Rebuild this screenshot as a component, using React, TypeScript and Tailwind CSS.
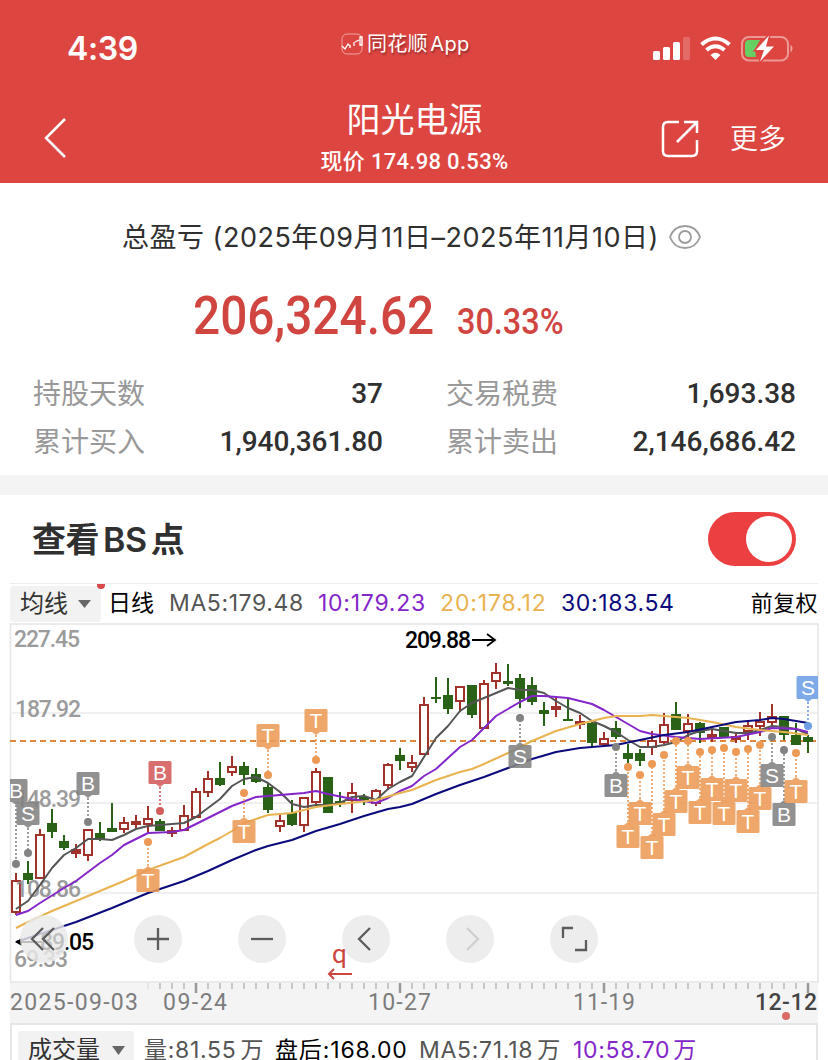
import React from 'react'

const FONT = "font-['Inter','Noto_Sans_CJK_SC',sans-serif]"
const DIN = "font-['Roboto','Noto_Sans_CJK_SC',sans-serif]"

const TOP = 623

// kind, high, top, bottom, low
type Candle = ['r' | 'g', number, number, number, number]

const candles: Candle[] = [
  ['r', 873, 881, 912, 915], ['g', 861, 873, 880, 884], ['r', 829, 835, 878, 878], ['g', 809, 823, 832, 838],
  ['g', 835, 841, 848, 850], ['r', 844, 850, 853, 858], ['r', 829, 830, 855, 861], ['g', 822, 833, 839, 841],
  ['g', 803, 828, 832, 832], ['r', 817, 823, 829, 833], ['r', 815, 822, 822, 828], ['r', 806, 819, 824, 833],
  ['g', 819, 821, 831, 831], ['r', 827, 831, 833, 837], ['r', 805, 816, 830, 831], ['r', 788, 792, 817, 817],
  ['r', 771, 779, 792, 797], ['g', 762, 778, 785, 786], ['r', 756, 767, 772, 776], ['g', 762, 766, 775, 785],
  ['g', 768, 774, 782, 783], ['g', 783, 787, 810, 813], ['r', 815, 821, 826, 832], ['g', 800, 813, 825, 826],
  ['r', 797, 798, 825, 832], ['r', 768, 772, 802, 804], ['g', 777, 777, 813, 813], ['g', 792, 801, 803, 807],
  ['r', 783, 793, 800, 813], ['g', 794, 797, 800, 805], ['r', 789, 791, 803, 806], ['r', 763, 765, 785, 790],
  ['g', 748, 755, 761, 770], ['r', 755, 763, 767, 772], ['r', 697, 705, 754, 754], ['g', 677, 697, 698, 703],
  ['g', 678, 695, 709, 714], ['r', 686, 687, 701, 712], ['g', 685, 685, 715, 718], ['r', 680, 684, 728, 728],
  ['r', 663, 673, 681, 689], ['g', 664, 681, 684, 686], ['g', 674, 678, 699, 708], ['g', 677, 685, 702, 705],
  ['g', 702, 710, 714, 726], ['r', 698, 707, 708, 717], ['g', 698, 719, 720, 721], ['r', 715, 722, 724, 729],
  ['g', 721, 723, 743, 747], ['r', 732, 739, 744, 745], ['g', 721, 728, 737, 739], ['g', 744, 753, 759, 763],
  ['g', 749, 753, 761, 766], ['r', 731, 741, 747, 755], ['r', 713, 725, 742, 744], ['g', 702, 714, 730, 730],
  ['r', 714, 724, 731, 738], ['g', 722, 723, 733, 743], ['r', 730, 735, 736, 742], ['g', 727, 727, 737, 738],
  ['r', 734, 737, 739, 743], ['r', 721, 726, 731, 740], ['r', 712, 722, 726, 736], ['r', 704, 717, 722, 727],
  ['g', 716, 716, 735, 740], ['g', 723, 735, 745, 745], ['g', 735, 737, 742, 753],
]

const averages = [
  {
    color: '#555555',
    points:
      '16,909 28,901 40,885 52,868 64,855 76,848 88,839 100,839 112,840 124,835 136,829 148,826 160,825 172,824 184,823 196,817 208,808 220,799 232,786 244,779 256,777 268,783 280,792 292,804 304,807 316,805 328,805 340,803 352,797 364,796 376,800 388,789 400,782 412,776 424,757 436,738 448,726 460,711 472,703 484,698 496,693 508,688 520,690 532,690 544,693 556,701 568,708 580,713 592,721 604,726 616,732 628,740 640,747 652,747 664,745 676,742 688,735 700,731 712,729 724,731 736,733 748,733 760,730 772,726 784,727 796,729 808,734',
  },
  {
    color: '#8426c9',
    points:
      '16,915 28,911 40,903 64,888 76,881 100,863 112,855 124,845 148,833 172,832 184,830 196,824 208,818 220,812 232,806 256,797 280,795 304,793 316,791 328,794 352,799 364,801 376,803 388,798 400,791 412,786 424,776 436,769 460,747 472,740 496,716 508,709 520,702 532,696 544,696 568,698 592,704 604,710 616,717 628,724 640,731 652,734 676,737 700,739 736,737 760,732 772,728 796,729 808,732',
  },
  {
    color: '#e8b350',
    points:
      '16,928 28,922 52,911 76,901 100,891 124,881 148,870 184,857 208,844 220,838 232,831 244,823 268,815 292,813 316,807 340,804 376,800 400,793 412,790 436,780 460,772 472,769 484,764 508,753 532,741 556,731 580,724 604,718 616,716 640,716 652,715 688,718 712,722 736,727 760,730 784,732 808,735',
  },
  {
    color: '#0a0a7c',
    points:
      '16,942 28,938 64,926 76,922 112,908 136,898 148,893 184,881 208,871 232,860 256,850 268,846 292,840 316,831 340,824 364,816 388,809 400,807 412,804 436,794 460,785 484,777 508,768 532,759 556,752 580,748 604,746 616,745 640,740 664,735 688,732 712,727 736,722 760,720 772,718 784,719 808,723',
  },
]

const GRAY = '#828282'
const ORANGE = '#ec9a56'

// letter, x, dot y, box top, colour
type Marker = [string, number, number, number, string]

const markers: Marker[] = [
  ['B', 16, 864, 779, GRAY], ['S', 28, 853, 802, GRAY], ['B', 88, 822, 772, GRAY], ['B', 160, 811, 761, '#d45b5b'],
  ['T', 148, 842, 869, ORANGE], ['T', 244, 793, 820, ORANGE], ['T', 268, 775, 724, ORANGE], ['T', 316, 760, 709, ORANGE],
  ['S', 520, 718, 745, GRAY], ['B', 616, 747, 774, GRAY], ['T', 628, 767, 825, ORANGE], ['T', 640, 775, 802, ORANGE],
  ['T', 652, 764, 836, ORANGE], ['T', 664, 755, 813, ORANGE], ['T', 676, 741, 790, ORANGE], ['T', 688, 741, 766, ORANGE],
  ['T', 700, 752, 801, ORANGE], ['T', 712, 750, 778, ORANGE], ['T', 724, 748, 802, ORANGE], ['T', 736, 752, 779, ORANGE],
  ['T', 748, 749, 810, ORANGE], ['T', 760, 745, 787, ORANGE], ['S', 772, 737, 764, GRAY], ['B', 784, 750, 803, GRAY],
  ['T', 796, 753, 780, ORANGE], ['S', 808, 726, 676, '#6e9fe6'],
]

const CandleShape = ({ data, x }: { data: Candle; x: number }) => {
  const [kind, high, top, bottom, low] = data
  const color = kind === 'r' ? '#a0322b' : '#2a6318'
  const h = Math.max(bottom - top, 2)
  return (
    <g stroke={color} strokeWidth="2">
      <line x1={x} x2={x} y1={high} y2={top} />
      <line x1={x} x2={x} y1={top + h} y2={low} />
      {kind === 'r' ? (
        <rect x={x - 4} y={top} width="8" height={h} fill={h < 4 ? color : '#fff'} />
      ) : (
        <rect x={x - 5} y={top} width="10" height={h} fill={color} stroke="none" />
      )}
    </g>
  )
}

const MarkerShape = ({ data }: { data: Marker }) => {
  const [letter, x, dot, top, color] = data
  const above = top < dot
  const edge = above ? top + 23 : top
  const tip = above ? edge + 3 : edge - 3
  return (
    <g>
      <line x1={x} x2={x} y1={tip} y2={dot} stroke={color} strokeWidth="1.6" strokeDasharray="2 2" />
      <circle cx={x} cy={dot} r="4" fill={color} />
      <g opacity="0.88">
        <rect x={x - 11.5} y={top} width="23" height="23" rx="1.5" fill={color} />
        <path d={`M${x - 4} ${edge}L${x} ${tip}L${x + 4} ${edge}Z`} fill={color} />
      </g>
      <text x={x} y={top + 19} textAnchor="middle" fontSize="21" fill="#fff" className="font-['Liberation_Sans',sans-serif]">
        {letter}
      </text>
    </g>
  )
}

const StatusBar = () => (
  <div className="flex h-[92px] items-center px-[67px] pt-[4px]">
    <div className="w-[271px] pt-[2px] text-[32px] leading-none font-semibold tracking-[-0.4px]">4:39</div>
    <div className="-mt-[9px] flex flex-1 items-center gap-[4px] pl-[3px] text-[20px] [text-shadow:1px_2px_2px_rgba(0,0,0,0.35)]">
      <svg width="22" height="22" viewBox="0 0 22 22" fill="none" stroke="#fff">
        <rect x="1" y="1" width="20" height="20" rx="5" opacity="0.5" />
        <path d="M1 13l3 3 3-5 2 2M9 12v3M13 9v4M14 9l4-2M19 4v8h2V4z" strokeWidth="1.3" />
      </svg>
      <span className="leading-none tracking-[0.3px] [word-spacing:-3.5px]">同花顺 App</span>
    </div>
    <svg className="mt-[1px] -mr-[33px] shrink-0" width="142" height="28" viewBox="652 35 142 28" fill="#fff">
      <rect x="653" y="51" width="7" height="9" rx="1.5" />
      <rect x="663" y="47" width="7" height="13" rx="1.5" />
      <rect x="673" y="42" width="7" height="18" rx="1.5" />
      <rect x="683" y="37" width="7" height="23" rx="1.5" opacity="0.2" />
      <g fill="none" stroke="#fff" strokeWidth="4">
        <path d="M701.500 44.500Q715.500 32.500 729.500 44.500" />
        <path d="M706.500 50Q715.500 42.500 724.500 50" />
      </g>
      <path d="M710.500 55Q715.500 50.500 720.500 55L715.500 60Z" />
      <rect x="742" y="37" width="46" height="23.500" rx="7" fill="none" stroke="#fff" strokeWidth="2" opacity="0.45" />
      <path d="M790.500 44.500q4 4 0 8z" opacity="0.5" />
      <path d="M749 40h11l-5 9 1 8h-7q-4 0-4-4v-9q0-4 4-4z" fill="#65cf64" />
      <path d="M769 35.500l-13 14.500h8l-4 11.500 14-15h-8z" stroke="#dd4541" strokeWidth="3" paintOrder="stroke" />
    </svg>
  </div>
)

const Header = () => (
  <header className="h-[183px] bg-[#dd4541] text-white">
    <StatusBar />
    <div className="flex h-[91px] items-center justify-between pr-[42px] pl-[43px]">
      <svg width="275" height="42" viewBox="0 0 275 42" fill="none" stroke="#fff" strokeWidth="2.5">
        <path d="M22 2L3 21l19 19" />
      </svg>
      <div className="-mt-[2px] flex w-[192px] flex-col items-center whitespace-nowrap">
        <h1 className="text-[34px] leading-[44px] font-normal">阳光电源</h1>
        <p className={`${DIN} mt-[7px] text-[22px] leading-[26px] font-medium tracking-[0.3px]`}>
          现价 174.98 0.53%
        </p>
      </div>
      <div className="flex w-[275px] items-center justify-end gap-[31px] pt-[2px]">
        <svg width="38" height="38" viewBox="0 0 38 38" fill="none" stroke="#fff" strokeWidth="2.500">
          <path d="M18 2H7Q2 2 2 7v24q0 5 5 5h24q5 0 5-5V20M23 2h13v11M36 2L16 22" />
        </svg>
        <span className="text-[28px] font-[350]">更多</span>
      </div>
    </div>
  </header>
)

const Stat = ({ label, value }: { label: string; value: string }) => (
  <div className="flex h-[48px] items-center justify-between">
    <span className="text-[28px] text-[#999]">{label}</span>
    <span className={`${DIN} -mr-[1px] text-[28px] font-medium text-[#303030]`}>{value}</span>
  </div>
)

const Summary = () => (
  <section className="h-[292px] px-[33px]">
    <div className="flex h-[109px] items-center gap-[9px] pl-[89px] text-[27px] whitespace-nowrap text-[#303030]">
      <span className="pt-[1px] tracking-[0.5px]">总盈亏 (2025年09月11日–2025年11月10日)</span>
      <svg className="-mt-[1px]" width="34" height="26" viewBox="0 0 34 26" fill="none" stroke="#9c9c9c" strokeWidth="1.8">
        <path d="M2 13C5 5 10 2 17 2s12 3 15 11c-3 8-8 11-15 11S5 21 2 13Z" />
        <circle cx="17" cy="13" r="6" />
      </svg>
    </div>
    <div className={`${DIN} -mt-[3px] flex h-[69px] items-baseline pl-[160px] leading-none font-medium text-[#d0453f]`}>
      <span className="w-[264px] origin-left scale-x-[0.885] text-[54px]">206,324.62</span>
      <span className="origin-left scale-x-[0.9] text-[36px]">30.33%</span>
    </div>
    <div className="grid grid-cols-2 gap-x-[64px] pt-[12px]">
      <Stat label="持股天数" value="37" />
      <Stat label="交易税费" value="1,693.38" />
      <Stat label="累计买入" value="1,940,361.80" />
      <Stat label="累计卖出" value="2,146,686.42" />
    </div>
  </section>
)

const Legend = () => (
  <div className="mx-[10px] flex h-[40px] items-center border-t border-[#ececec] text-[23px] whitespace-nowrap">
    <div className="relative flex h-[36px] w-[91px] items-center gap-[10px] rounded bg-[#f2f2f2] pl-[10px] text-[24px] text-[#333]">
      均线
      <svg width="13" height="8" viewBox="0 0 14 10" preserveAspectRatio="none">
        <path d="M0 0h14L7 10z" fill="#666" />
      </svg>
      <i className="absolute -top-[2px] right-[-4px] h-[5px] w-[8px] rounded-b-full bg-[#d94848]" />
    </div>
    <span className="ml-[7px] w-[61px] text-[23px] text-black">日线</span>
    <span className="w-[149px] tracking-[0.6px] text-[#555]">MA5:179.48</span>
    <span className="w-[122px] tracking-[0.75px] text-[#8426c9]">10:179.23</span>
    <span className="w-[121px] tracking-[0.85px] text-[#e8b350]">20:178.12</span>
    <span className="tracking-[0.65px] text-[#0a0a7c]">30:183.54</span>
    <span className="ml-auto text-[22px] tracking-[0.4px] text-black">前复权</span>
  </div>
)

const Buttons = () => (
  <g fill="none" stroke="#5c5c5c" strokeWidth="2.300">
    {[44, 158, 262, 366, 470, 574].map((x) => (
      <circle key={x} cx={x} cy="939" r="24" fill="#e9e9e9" fillOpacity="0.82" stroke="none" />
    ))}
    <path d="M43 928L32 939l11 11M54 928L43 939l11 11" />
    <path d="M147 939h22M158 928v22" />
    <path d="M251 939h22" />
    <path d="M370 928L359 939l11 11" />
    <path d="M467 928l11 11-11 11" stroke="#cfcfcf" />
    <path d="M563 938V928h10M586 940v10h-11" />
  </g>
)

const Chart = () => (
  <svg className={`${DIN} block`} width="828" height="360" viewBox={`0 ${TOP} 828 360`}>
    <clipPath id="plot">
      <rect x="10" y={TOP} width="808" height="360" />
    </clipPath>
    <g stroke="#ececec" strokeWidth="1.500">
      <rect x="10.500" y="624" width="807.500" height="358" fill="none" strokeWidth="1.600" stroke="#e6e6e6" />
      <path d="M10 713h808M10 803h808M10 893h808" />
    </g>
    <line x1="10" x2="817" y1="741" y2="741" stroke="#e0873f" strokeWidth="1.800" strokeDasharray="6 4" />
    {candles.map((c, i) => (
      <CandleShape key={i} data={c} x={16 + i * 12} />
    ))}
    <g fontSize="23" fontWeight="500" fill="#8e8e8e" fillOpacity="0.9">
      <text x="14" y="647" textLength="66">227.45</text>
      <text x="15" y="717" textLength="66">187.92</text>
      <text x="15" y="807" textLength="66">148.39</text>
      <text x="15" y="897" textLength="66">108.86</text>
      <text x="14" y="967" textLength="54">69.33</text>
    </g>
    {averages.map((a) => (
      <polyline key={a.color} points={a.points} fill="none" stroke={a.color} strokeWidth="2" strokeLinejoin="round" />
    ))}
    <g clipPath="url(#plot)">
      {markers.map((m, i) => (
        <MarkerShape key={i} data={m} />
      ))}
    </g>
    <g fontSize="23" fontWeight="500">
      <text x="405" y="648" textLength="66">209.88</text>
      <text x="40" y="950" textLength="54">89.05</text>
    </g>
    <path d="M472 640h22M487 634l8 6-8 6M42 942H18" fill="none" stroke="#000" strokeWidth="1.800" />
    <path d="M15 942l7-4v8z" />
    <Buttons />
    <text x="332" y="963" fontSize="26" fill="#cb4640">q</text>
    <path d="M352 974h-23M334 969l-5 5 5 5" fill="none" stroke="#cb4640" strokeWidth="2" />
  </svg>
)

const ticks = Array.from({ length: 56 }, (_, i) => 148 + i * 12)

const DateAxis = () => (
  <svg className={`${DIN} mx-[10px] block bg-[#f4f4f4]`} width="808" height="40" viewBox="10 983 808 40">
    {ticks.map((x) => {
      const major = (x - 196) % 204 === 0
      return (
        <line
          key={x}
          x1={x}
          x2={x}
          y1="983"
          y2={major ? 993 : 989}
          stroke="#999"
          strokeWidth={major ? 2.5 : 1}
          opacity={x === 148 ? 0.3 : 1}
        />
      )
    })}
    <g fontSize="23" fill="#7c7c7c">
      <text x="10" y="1010" textLength="128">2025-09-03</text>
      <text x="163" y="1010" textLength="64">09-24</text>
      <text x="368" y="1010" textLength="63">10-27</text>
      <text x="573" y="1010" textLength="62">11-19</text>
      <text x="755" y="1010" textLength="62" fill="#444" fontWeight="500">12-12</text>
    </g>
    <circle cx="786" cy="1016" r="4" fill="#d96a68" />
  </svg>
)

const Volume = () => (
  <div className="mx-[10px] flex h-[37px] items-end overflow-hidden border-x-2 border-t-2 border-[#e6e6e6] text-[23px] whitespace-nowrap">
    <div className="ml-[6px] flex h-[29px] w-[116px] shrink-0 items-center gap-[12px] rounded-t bg-[#f2f2f2] pt-[9px] pl-[10px] text-[24px] text-[#333]">
      成交量
      <svg width="13" height="9" viewBox="0 0 12 10" preserveAspectRatio="none">
        <path d="M0 0h12L6 10z" fill="#666" />
      </svg>
    </div>
    <div className="-mb-[7px] ml-[10px] flex leading-[34px] tracking-[0.7px]">
      <span className="w-[131px] text-[#555]">量:81.55<span className="ml-[4px]">万</span></span>
      <span className="w-[144px] tracking-[0.85px] text-black">盘后:168.00</span>
      <span className="w-[154px] text-[#555]">MA5:71.18<span className="ml-[4px]">万</span></span>
      <span className="text-[#8426c9]">10:58.70<span className="ml-[3px]">万</span></span>
    </div>
  </div>
)

const App = () => {
  return (
    <div className={`${FONT} h-[1060px] w-[828px] overflow-hidden bg-white`}>
      <Header />
      <Summary />
      <div className="h-[20px] bg-[#f4f4f4]"></div>
      <div className="flex h-[88px] items-center justify-between px-[32px]">
        <h2 className="text-[34px] font-semibold tracking-[-0.5px] text-[#303030] [word-spacing:-4px]">查看 BS 点</h2>
        <div className="flex h-[54px] w-[88px] items-center justify-end rounded-full bg-[#eb3f42] pr-[4px]">
          <div className="h-[46px] w-[46px] rounded-full bg-white"></div>
        </div>
      </div>
      <Legend />
      <Chart />
      <DateAxis />
      <Volume />
    </div>
  )
}

export default App
